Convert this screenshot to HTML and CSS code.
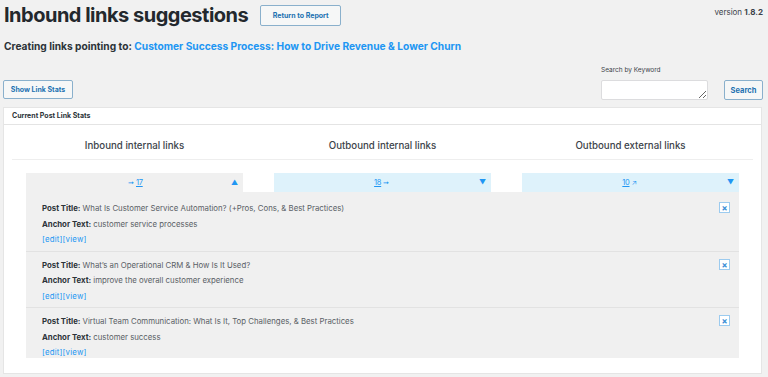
FILE: index.html
```html
<!DOCTYPE html>
<html lang="en">
<head>
  <meta charset="UTF-8" />
  <meta name="viewport" content="width=device-width, initial-scale=1.0"/>
  <title>Inbound links suggestions</title>
  <link rel="stylesheet" href="styles.css">
</head>
<body>
  <div class="wrap">
    <div class="top-row">
      <h1>Inbound links suggestions</h1>
      <button class="btn btn-return">Return to Report</button>
      <span class="version">version <b>1.8.2</b></span>
    </div>

    <p class="pointing">Creating links pointing to: <a href="#">Customer Success Process: How to Drive Revenue &amp; Lower Churn</a></p>

    <div class="controls">
      <button class="btn btn-stats">Show Link Stats</button>
      <div class="search">
        <div class="search-field">
          <label>Search by Keyword</label>
          <textarea></textarea>
        </div>
        <button class="btn btn-search">Search</button>
      </div>
    </div>

    <section class="panel">
      <div class="panel-title">Current Post Link Stats</div>
      <div class="panel-body">
        <div class="stats-head">
          <span>Inbound internal links</span>
          <span>Outbound internal links</span>
          <span>Outbound external links</span>
        </div>

        <div class="stats-cols">
          <div class="col-box active">
            <a href="#"><span class="arr">&#10142;</span>17</a>
            <span class="caret">&#9650;</span>
          </div>
          <div class="col-box">
            <a href="#">18<span class="arr">&#10142;</span></a>
            <span class="caret">&#9660;</span>
          </div>
          <div class="col-box">
            <a href="#">10<span class="arr ext">&#8599;</span></a>
            <span class="caret">&#9660;</span>
          </div>
        </div>

        <div class="link-list">
          <div class="link-item">
            <div><b>Post Title:</b> What Is Customer Service Automation? (+Pros, Cons, &amp; Best Practices)</div>
            <div><b>Anchor Text:</b> customer service processes</div>
            <div class="actions"><a href="#">[edit]</a><a href="#">[view]</a></div>
            <span class="remove">&#215;</span>
          </div>
          <div class="link-item">
            <div><b>Post Title:</b> What’s an Operational CRM &amp; How Is It Used?</div>
            <div><b>Anchor Text:</b> improve the overall customer experience</div>
            <div class="actions"><a href="#">[edit]</a><a href="#">[view]</a></div>
            <span class="remove">&#215;</span>
          </div>
          <div class="link-item">
            <div><b>Post Title:</b> Virtual Team Communication: What Is It, Top Challenges, &amp; Best Practices</div>
            <div><b>Anchor Text:</b> customer success</div>
            <div class="actions"><a href="#">[edit]</a><a href="#">[view]</a></div>
            <span class="remove">&#215;</span>
          </div>
        </div>
      </div>
    </section>
  </div>
</body>
</html>
```

FILE: styles.css
```css
:root {
  --azul: #2196f3;
  --azul-botao: #2271b1;
  --texto: #2c3338;
  --texto-suave: #5a6066;
  --fundo: #f1f1f1;
  --caixa-azul: #def2fb;
}

* {
  margin: 0;
  padding: 0;
  box-sizing: border-box;
}

body {
  font-family: 'Inter', 'Roboto', sans-serif;
  background-color: var(--fundo);
  color: var(--texto);
}

a {
  color: var(--azul);
  text-decoration: none;
}

.wrap {
  padding: 2px 5px 0 3px;
}

.top-row {
  display: flex;
  align-items: flex-start;
}

.top-row h1 {
  font-size: 20px;
  font-weight: 700;
  letter-spacing: -0.5px;
  line-height: 26px;
  padding-left: 1px;
  color: #23282d;
}

.btn {
  font-family: inherit;
  font-weight: 700;
  color: var(--azul-botao);
  background-color: #f6f7f7;
  border: 1px solid #8ab0cc;
  border-radius: 2px;
  cursor: pointer;
}

.btn-return {
  margin: 3px 0 0 12px;
  width: 81px;
  height: 21px;
  font-size: 7px;
}

.version {
  margin-left: auto;
  margin-top: 5px;
  font-size: 8px;
  color: #3c434a;
}

.pointing {
  margin-top: 11px;
  padding-left: 1px;
  font-size: 10.2px;
  font-weight: 700;
  line-height: 14px;
}

.controls {
  display: flex;
  justify-content: space-between;
  align-items: flex-end;
  margin-top: 13px;
}

.btn-stats {
  width: 70px;
  height: 19px;
  font-size: 7px;
  margin-bottom: 1px;
}

.search {
  display: flex;
  align-items: flex-end;
  gap: 16px;
}

.search-field {
  display: flex;
  flex-direction: column;
}

.search-field label {
  font-size: 6.5px;
  color: #3c434a;
  line-height: 8px;
  margin-bottom: 6px;
}

.search-field textarea {
  width: 107px;
  height: 20px;
  border: 1px solid #dcdcde;
  border-radius: 2px;
  background-color: #fff;
  resize: vertical;
}

.btn-search {
  width: 39px;
  height: 20px;
  font-size: 7.5px;
}

.panel {
  margin-top: 7px;
  background-color: #fff;
  border: 1px solid #e5e5e5;
  margin-right: 1px;
}

.panel-title {
  height: 17px;
  line-height: 16px;
  padding-left: 8px;
  font-size: 7px;
  font-weight: 700;
  border-bottom: 1px solid #e4e4e4;
}

.panel-body {
  padding: 0 22px 15px;
}

.stats-head {
  display: grid;
  grid-template-columns: repeat(3, 1fr);
  column-gap: 31px;
  margin: 0 -14px;
  padding: 14px 14px 7px;
  border-bottom: 1px solid #eeeeee;
  font-size: 9.7px;
  font-weight: 500;
  line-height: 13px;
  color: #3c434a;
  text-align: center;
}

.stats-cols {
  display: grid;
  grid-template-columns: repeat(3, 1fr);
  column-gap: 31px;
  margin-top: 13px;
}

.col-box {
  height: 19px;
  display: flex;
  align-items: center;
  justify-content: center;
  position: relative;
  background-color: var(--caixa-azul);
  font-size: 7.5px;
}

.col-box.active {
  background-color: #f0f0f0;
}

.col-box a {
  text-decoration: underline;
  letter-spacing: -0.3px;
}

.col-box .arr {
  text-decoration: none;
  display: inline-block;
  font-size: 7px;
  margin: 0 2px;
}

.caret {
  position: absolute;
  right: 5px;
  top: 5px;
  font-size: 7px;
  color: var(--azul);
}

.link-list {
  height: 166px;
  overflow: hidden;
  background-color: #f0f0f0;
  padding-top: 3px;
}

.link-item {
  position: relative;
  padding: 6px 16px 3px;
  border-bottom: 1px solid #e2e2e2;
  font-size: 7.8px;
  line-height: 15.5px;
  color: var(--texto-suave);
}

.link-item b {
  color: var(--texto);
}

.actions a {
  color: var(--azul);
  letter-spacing: 0.2px;
}

.remove {
  position: absolute;
  top: 7px;
  right: 9px;
  width: 11px;
  height: 11px;
  display: flex;
  align-items: center;
  justify-content: center;
  background-color: #fff;
  border: 1px solid #9ccbef;
  color: #3d8fd6;
  font-size: 9px;
  font-weight: 700;
  line-height: 1;
}
```
